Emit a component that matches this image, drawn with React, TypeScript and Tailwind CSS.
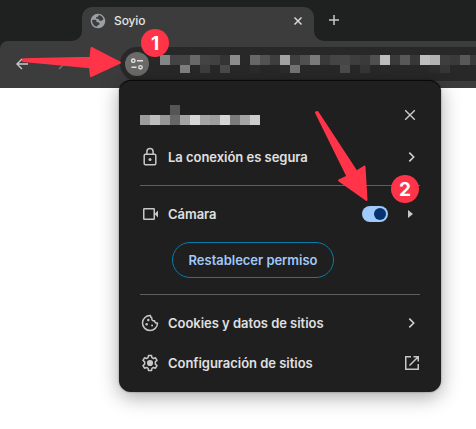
import React from "react";

const urlTop = [
  "#858585", "#444444", "#444444", "#686868", "#444444", "#414141", "#343434", "#8c8c8c",
  "#282828", "#686868", "#525252", "#3e3e3e", "#a2a2a2", "#3f3f3f", "#505050", "#7a7a7a",
  "#3a3a3a", "#454545", "#464646", "#3e3e3e", "#3a3a3a", "#505050", "#bebebe", "#3a3a3a",
  "#585858", "#383838", "#bebebe", "#b0b0b0", "#3e3e3e", "#3a3a3a", "#585858", "#3a3a3a",
];
const urlBottom = [
  "#282828", "#282828", "#808080", "#282828", "#3e3e3e", "#282828", "#4a4a4a", "#282828",
  "#282828", "#2c2c2c", "#282828", "#282828", "#2c2c2c", "#747474", "#282828", "#282828",
  "#282828", "#282828", "#4c4c4c", "#282828", "#363636", "#282828", "#2a2a2a", "#282828",
  "#282828", "#282828", "#282828", "#2b2b2b", "#363636", "#282828", "#282828", "#282828",
];
const hostCells = [
  "#9c9c9c", "#bebebe", "#969696", "#666666", "#a4a4a4", "#d6d6d6",
  "#a4a4a4", "#9e9e9e", "#d6d6d6", "#7c7c7c", "#a4a4a4", "#cdcdcd",
];

function Cells({ colors, height }: { colors: string[]; height: number }) {
  return (
    <div className="flex">
      {colors.map((c, i) => (
        <span key={i} className="w-2.5 shrink-0" style={{ backgroundColor: c, height }} />
      ))}
    </div>
  );
}

function Chevron() {
  return (
    <svg width="20" height="20" viewBox="0 0 20 20" fill="none" stroke="#d0d0d0" strokeWidth="1.6">
      <path d="M9.3 5.6 13.7 10l-4.400 4.400" />
    </svg>
  );
}

function Row({ icon, label, end, className }: { icon: React.ReactNode; label: string; end: React.ReactNode; className?: string }) {
  return (
    <div className={"flex h-10 items-center " + (className ?? "")}>
      <span className="flex w-5 shrink-0 justify-center">{icon}</span>
      <span className="ml-2 flex-1 pt-0.5 whitespace-nowrap">{label}</span>
      {end}
    </div>
  );
}

function Badge({ n, className }: { n: string; className: string }) {
  return (
    <span className={"absolute flex size-7 items-center justify-center rounded-full bg-[#ff3448] text-[19px] leading-none font-bold text-white " + className}>
      {n}
    </span>
  );
}

export default function App() {
  return (
    <div className="relative h-[429px] w-[476px] overflow-hidden bg-white font-['Inter','Liberation_Sans',sans-serif]">
      <header className="bg-[#1f2120]">
        <div className="flex h-[41px] items-end pl-[82px]">
          <div className="relative flex h-[34px] w-[232px] items-center rounded-t-[10px] bg-[#3c3c3c] pl-2 pr-[11px]">
            <svg className="absolute -left-[10px] bottom-0" width="10" height="10" viewBox="0 0 10 10">
              <path d="M10 0v10H0A10 10 0 0 0 10 0" fill="#3c3c3c" />
            </svg>
            <svg className="absolute -right-[10px] bottom-0" width="10" height="10" viewBox="0 0 10 10">
              <path d="M0 0v10h10A10 10 0 0 1 0 0" fill="#3c3c3c" />
            </svg>
            <svg className="mt-[-6px]" width="16" height="16" viewBox="1 1 22 22">
              <path
                fill="#9aa0a6"
                d="M12 2C6.48 2 2 6.48 2 12s4.48 10 10 10 10-4.48 10-10S17.52 2 12 2zm-1 17.930c-3.950-.49-7-3.850-7-7.930 0-.62.08-1.210.21-1.790H8c1.500 0 2 1 2 2v1.500h2c1.200 0 2 .8 2 2s-.8 2-2 2h-1v2.220zM19.500 9.500l-2.500 2h-3l-1.500-2.500H9.500V6.500l2.500-.5 1-2.200c3 .3 5.500 2.500 6.500 5.700z"
              />
            </svg>
            <span className="mt-[-6px] ml-2 flex-1 text-[12px] font-medium tracking-[-0.1px] text-[#e3e3e3]">Soyio</span>
            <svg className="mt-[-6px]" width="10" height="10" viewBox="0 0 10 10" stroke="#d8d8d8" strokeWidth="1.500">
              <path d="m1.500 1.500 7 7m0-7-7 7" />
            </svg>
          </div>
          <svg className="mb-4 ml-[15px]" width="10" height="10" viewBox="0 0 10 10" stroke="#c8c8c8" strokeWidth="1.500">
            <path d="M5 0v10M0 5h10" />
          </svg>
        </div>
        <div className="flex h-[47px] items-start rounded-tl-lg bg-[#3c3c3c] pt-1.5">
          <div className="flex w-[120px] items-center gap-[25px] pt-[11px] pl-4">
            <svg width="12" height="12" viewBox="0 0 12 12" fill="none" stroke="#c9c9c9" strokeWidth="1.400">
              <path d="M12 6H1m5-5L1 6l5 5" />
            </svg>
            <svg width="12" height="12" viewBox="0 0 12 12" fill="none" stroke="#777777" strokeWidth="1.400">
              <path d="M0 6h11M6 1l5 5-5 5" />
            </svg>
          </div>
          <div className="flex h-[34px] flex-1 items-start overflow-hidden rounded-l-full bg-[#282828] pt-[5px] pl-[5px]">
            <span className="flex size-6 shrink-0 items-center justify-center rounded-full bg-[#6a6a68]">
              <svg width="14" height="14" viewBox="0 0 14 14" fill="none" stroke="#e3e3e3" strokeWidth="1.400">
                <circle cx="3.300" cy="3.700" r="1.700" />
                <path d="M7 3.700h6M1.500 10.300h5" />
                <circle cx="10.500" cy="10.300" r="1.700" />
              </svg>
            </span>
            <div className="mt-[3px] ml-[11px]">
              <Cells colors={urlTop} height={10} />
              <Cells colors={urlBottom} height={8} />
            </div>
          </div>
        </div>
      </header>

      <section className="absolute top-20 left-[119px] flex h-[312px] w-[322px] flex-col rounded-xl bg-[#1f1f1f] pr-[21px] pl-[21px] text-[13px] font-semibold tracking-[-0.03px] text-[#e0e0e0] shadow-[0_5px_20px_rgba(0,0,0,0.34),0_0_2px_rgba(0,0,0,0.45),inset_0_1px_0_#080808]">
        <div className="flex h-[57px] items-start justify-between pt-[25px]">
          <div>
            <div className="ml-[30px] size-2.5 bg-[#555555]" />
            <Cells colors={hostCells} height={10} />
          </div>
          <svg className="mt-1 mr-1" width="12" height="12" viewBox="0 0 12 12" stroke="#cccccc" strokeWidth="1.400">
            <path d="m1.200 1.200 9.600 9.600m0-9.600-9.600 9.600" />
          </svg>
        </div>
        <Row
          label="La conexión es segura"
          end={<Chevron />}
          icon={
            <svg width="20" height="20" viewBox="0 0 20 20" fill="none" stroke="#c7c7c7" strokeWidth="1.500">
              <rect x="4.200" y="7.300" width="11.600" height="10.500" rx="1.200" />
              <path d="M6.900 7.300V4.700a3.100 3.100 0 0 1 6.200 0v2.600" />
              <circle cx="10" cy="12.600" r="1.500" fill="#c7c7c7" stroke="none" />
            </svg>
          }
        />
        <div className="mt-2 h-px shrink-0 bg-[#5e5e5e]" />
        <Row
          className="mt-2"
          label="Cámara"
          end={
            <div className="flex items-center">
              <span className="flex h-4 w-[26px] items-center justify-end rounded-full bg-[#a0cafa] pr-0.5">
                <span className="size-3 rounded-full bg-[#063370]" />
              </span>
              <svg className="ml-5 mr-[7px]" width="5" height="8" viewBox="0 0 5 8">
                <path d="m0 0 5 4-5 4Z" fill="#c7c7c7" />
              </svg>
            </div>
          }
          icon={
            <svg className="ml-0.5" width="18" height="20" viewBox="0 0 18 20" fill="none" stroke="#c7c7c7" strokeWidth="1.500">
              <rect x="1.750" y="4.750" width="10.500" height="10.500" rx=".5" />
              <path d="m12.500 10 3.500-3.500v7Z" fill="#c7c7c7" stroke="none" />
            </svg>
          }
        />
        <button className="mt-2 ml-8 flex h-9 w-[162px] shrink-0 items-center justify-center rounded-full border border-[#087da9] pt-0.5 text-[#a0c9fa]">
          Restablecer permiso
        </button>
        <div className="mt-4 h-px shrink-0 bg-[#5e5e5e]" />
        <Row
          className="mt-2"
          label="Cookies y datos de sitios"
          end={<Chevron />}
          icon={
            <svg width="20" height="20" viewBox="0 0 24 24" fill="none" stroke="#c7c7c7" strokeWidth="1.800" strokeLinejoin="round">
              <path d="M12.500 3A9 9 0 1 0 21 12c-2 .5-3.500-.7-3.500-2.700-2.400.3-3.800-1.100-3.300-3.300-1.300-.6-1.800-1.600-1.700-3Z" />
              <g fill="#c7c7c7" stroke="none">
                <circle cx="10" cy="8.500" r="1.500" />
                <circle cx="8" cy="13.500" r="1.500" />
                <circle cx="14.500" cy="15" r="1.200" />
              </g>
            </svg>
          }
        />
        <Row
          label="Configuración de sitios"
          end={
            <svg className="mr-px" width="14" height="14" viewBox="0 0 14 14" fill="none" stroke="#c7c7c7" strokeWidth="1.500">
              <path d="M6 .75H.75v12.500h12.500V8M8.500.75h4.750V5.500M13 1 4.500 9.500" />
            </svg>
          }
          icon={
            <svg width="20" height="20" viewBox="0 0 24 24" fill="none" stroke="#c7c7c7" strokeWidth="1.800" strokeLinejoin="round">
              <path d="m10.200 3-.5 2.600-1.800 1-2.500-.8-1.800 3.100 2 1.800v2.600l-2 1.800 1.800 3.100 2.500-.8 1.800 1 .5 2.600h3.600l.5-2.600 1.800-1 2.500.8 1.800-3.100-2-1.800v-2.600l2-1.800-1.800-3.100-2.500.8-1.800-1-.5-2.600Z" />
              <circle cx="12" cy="12" r="3.700" fill="#c7c7c7" stroke="none" />
            </svg>
          }
        />
      </section>

      <svg className="absolute inset-0" width="476" height="429" viewBox="0 0 476 429" fill="#ff3448" stroke="#ff3448" strokeWidth="2" strokeLinejoin="round">
        <path d="M23 59.200 90.500 57.700 91.500 48 120 62.700 91 76 90 67.200 23 61Z" />
        <path d="M316 112.500 317.500 112 356.500 171.500 364.500 166.500 366.500 200 339 180.500 347.500 176.500Z" />
      </svg>
      <Badge n="1" className="top-[29px] left-[141px]" />
      <Badge n="2" className="top-[175px] left-[391px]" />
    </div>
  );
}
